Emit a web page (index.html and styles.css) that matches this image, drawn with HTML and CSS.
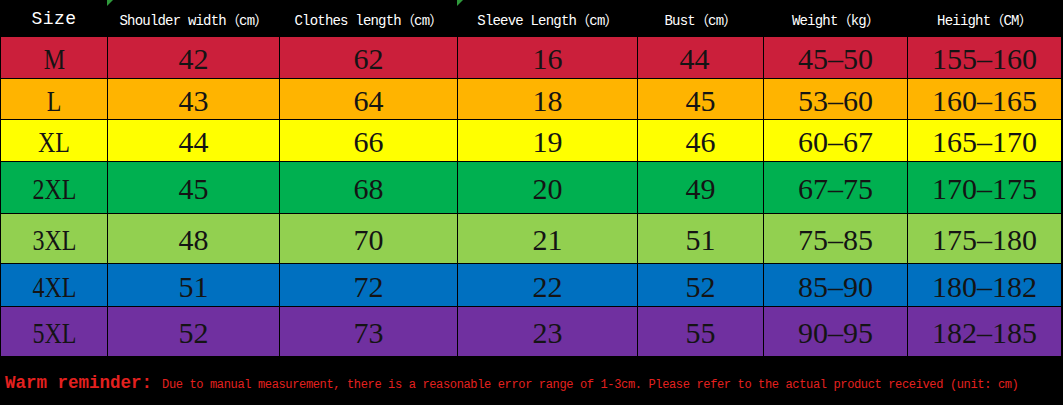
FILE: index.html
```html
<!DOCTYPE html>
<html lang="en">
<head>
<meta charset="utf-8">
<title>Size chart</title>
<link rel="stylesheet" href="styles.css">
</head>
<body>
<div class="sheet">
  <div class="chart">
    <div class="hd hd-size">Size</div>
    <div class="hd mark">Shoulder width（cm）</div>
    <div class="hd">Clothes length（cm）</div>
    <div class="hd mark">Sleeve Length（cm）</div>
    <div class="hd">Bust（cm）</div>
    <div class="hd">Weight（kg）</div>
    <div class="hd">Heiight（CM）</div>

    <div class="row red">
      <div class="c"><span class="sz">M</span></div><div class="c">42</div><div class="c">62</div><div class="c">16</div><div class="c"><span class="shift">44</span></div><div class="c">45–50</div><div class="c">155–160</div>
    </div>
    <div class="row orange">
      <div class="c"><span class="sz">L</span></div><div class="c">43</div><div class="c">64</div><div class="c">18</div><div class="c">45</div><div class="c">53–60</div><div class="c">160–165</div>
    </div>
    <div class="row yellow">
      <div class="c"><span class="sz">XL</span></div><div class="c">44</div><div class="c">66</div><div class="c">19</div><div class="c">46</div><div class="c">60–67</div><div class="c">165–170</div>
    </div>
    <div class="row green">
      <div class="c"><span class="sz">2XL</span></div><div class="c">45</div><div class="c">68</div><div class="c">20</div><div class="c">49</div><div class="c">67–75</div><div class="c">170–175</div>
    </div>
    <div class="row lime">
      <div class="c"><span class="sz">3XL</span></div><div class="c">48</div><div class="c">70</div><div class="c">21</div><div class="c">51</div><div class="c">75–85</div><div class="c">175–180</div>
    </div>
    <div class="row blue">
      <div class="c"><span class="sz">4XL</span></div><div class="c">51</div><div class="c">72</div><div class="c">22</div><div class="c">52</div><div class="c">85–90</div><div class="c">180–182</div>
    </div>
    <div class="row purple">
      <div class="c"><span class="sz">5XL</span></div><div class="c">52</div><div class="c">73</div><div class="c">23</div><div class="c">55</div><div class="c">90–95</div><div class="c">182–185</div>
    </div>
  </div>
  <div class="note">
    <span class="warn">Warm reminder:</span>
    <span class="msg">Due to manual measurement, there is a reasonable error range of 1-3cm. Please refer to the actual product received (unit: cm)</span>
  </div>
</div>
</body>
</html>
```

FILE: styles.css
```css
html, body {
  margin: 0;
  padding: 0;
  background: #000;
}

.sheet {
  width: 1063px;
  height: 405px;
  background: #000;
  overflow: hidden;
}

.chart {
  display: grid;
  grid-template-columns: 106px 171px 177px 179px 125px 143px 153px;
  grid-template-rows: 36px 41px 40px 41px 51px 49px 42px 49px;
  column-gap: 1px;
  row-gap: 1px;
  padding-left: 1px;
  background: #000;
}

.hd {
  position: relative;
  display: flex;
  align-items: center;
  justify-content: center;
  color: #fff;
  font-family: "Liberation Mono", "Noto Sans CJK SC", monospace;
  font-size: 14px;
  letter-spacing: -0.8px;
  white-space: nowrap;
  padding-top: 2px;
}

.hd-size {
  font-size: 18px;
  letter-spacing: 0.4px;
  padding-top: 1px;
}

.mark::before {
  content: "";
  position: absolute;
  left: -1px;
  top: 0;
  width: 0;
  height: 0;
  border-top: 6px solid #2f9a3c;
  border-right: 6px solid transparent;
}

.row {
  display: contents;
}

.c {
  display: flex;
  align-items: center;
  justify-content: center;
  font-family: "Liberation Serif", "Times New Roman", serif;
  font-size: 30px;
  line-height: 1;
  color: #141414;
  padding-top: 3px;
  white-space: nowrap;
}

.sz {
  display: inline-block;
  transform: scaleX(0.8);
}

.shift {
  margin-right: 12px;
}

.red .c { background: #cb1f3b; }
.orange .c { background: #ffb400; }
.yellow .c { background: #ffff00; }
.green .c { background: #00b050; }
.lime .c { background: #92d050; }
.blue .c { background: #0070c0; }
.purple .c { background: #7030a0; }

.note {
  display: flex;
  align-items: baseline;
  margin-top: 17px;
  padding-left: 5px;
  color: #e3201f;
  white-space: nowrap;
}

.warn {
  font-family: "Liberation Mono", monospace;
  font-size: 17.5px;
  line-height: 20px;
  font-weight: bold;
  letter-spacing: 0;
  margin-right: 10px;
}

.msg {
  font-family: "Liberation Mono", monospace;
  font-size: 12px;
  letter-spacing: -0.35px;
}
```
